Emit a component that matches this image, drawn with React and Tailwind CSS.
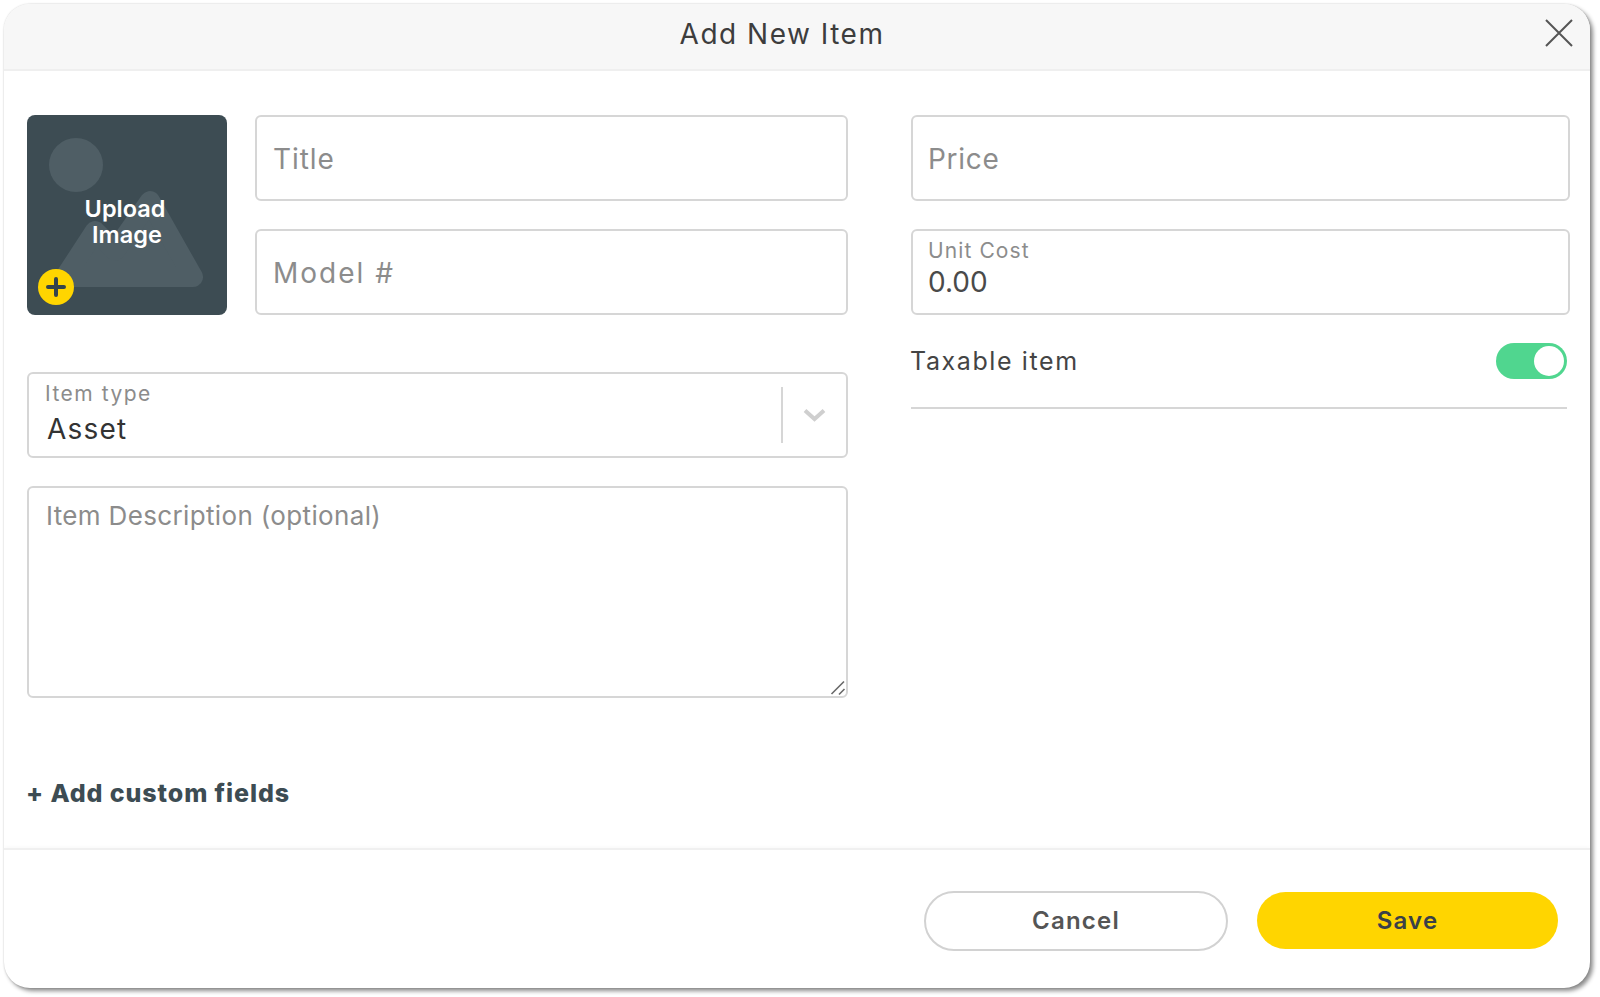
import React from "react";

function TextField({ placeholder, tracking = "tracking-[0.6px]", inset = "pl-[16px]" }) {
  return (
    <input
      readOnly
      placeholder={placeholder}
      className={`h-[86px] w-full rounded-[6px] border-2 border-[#d6d6d6] bg-white pt-[2px] text-[28px] text-[#333] outline-none placeholder:text-[#8c8c8c] ${inset} ${tracking}`}
    />
  );
}

function LabelField({ label, labelTracking, value, valueClass = "", stackClass = "", inset = "pl-[16px]", children }) {
  return (
    <div className={`flex h-[86px] w-full items-center rounded-[6px] border-2 border-[#d6d6d6] bg-white ${inset}`}>
      <div className={`flex-1 ${stackClass}`}>
        <div className={`text-[21px] leading-[24px] text-[#8c8c8c] ${labelTracking}`}>{label}</div>
        <div className={`text-[28px] leading-[34px] ${valueClass}`}>{value}</div>
      </div>
      {children}
    </div>
  );
}

export default function App() {
  return (
    <div className="h-[997px] w-[1600px] bg-white p-[4px] font-['Inter','Liberation_Sans',sans-serif]">
      <div className="flex h-[984px] w-[1586px] flex-col overflow-hidden rounded-[26px] bg-white shadow-[3px_3px_4px_rgba(0,0,0,0.45),0_0_2px_rgba(0,0,0,0.18)]">
        <header className="relative flex h-[67px] shrink-0 items-center justify-center border-b-2 border-[#efefef] bg-[#f7f7f7] pb-[5px] pr-[30px]">
          <h1 className="text-[28px] font-normal tracking-[1.5px] text-[#3d3d3d]">Add New Item</h1>
          <svg className="absolute right-[16px] top-[14px]" width="30" height="30" viewBox="0 0 30 30" fill="none" stroke="#555" strokeWidth="2">
            <path d="M2 2 L28 28 M28 2 L2 28" />
          </svg>
        </header>

        <main className="flex flex-1 pl-[23px] pr-[20px] pt-[44px]">
          <section className="w-[821px] shrink-0">
            <div className="flex gap-[28px]">
              <div className="relative flex h-[200px] w-[200px] shrink-0 items-center justify-center rounded-[8px] bg-[#3d4c53]">
                <svg className="absolute inset-0" width="200" height="200" viewBox="0 0 200 200">
                  <circle cx="49" cy="50" r="27" fill="#4f5e65" />
                  <path
                    d="M38 162 L68 116 L88 136 L123 86 L166 162 Z"
                    fill="#4f5e65"
                    stroke="#4f5e65"
                    strokeWidth="20"
                    strokeLinejoin="round"
                  />
                </svg>
                <div className="relative mr-[4px] mt-[14px] text-center text-[23.5px] font-semibold leading-[26.5px] text-white">
                  Upload
                  <br />
                  <span className="relative left-[2px]">Image</span>
                </div>
                <div className="absolute left-[11px] top-[154px] flex h-[36px] w-[36px] items-center justify-center rounded-full bg-[#ffd500]">
                  <svg width="22" height="22" viewBox="0 0 22 22" stroke="#34444c" strokeWidth="4" strokeLinecap="round">
                    <path d="M11 3 V19 M3 11 H19" />
                  </svg>
                </div>
              </div>
              <div className="flex w-[593px] flex-col gap-[28px]">
                <TextField placeholder="Title" tracking="tracking-[0.9px]" />
                <TextField placeholder="Model #" tracking="tracking-[2px]" />
              </div>
            </div>

            <div className="mt-[57px]">
              <LabelField
                label="Item type"
                labelTracking="tracking-[1.5px]"
                value={<span className="ml-[2px]">Asset</span>}
                valueClass="mt-[6px] text-[#333] tracking-[1.2px]"
                stackClass="mt-[-3px]"
              >
                <div className="h-[56px] w-[2px] bg-[#d6d6d6]" />
                <svg className="mx-[20px]" width="23" height="14" viewBox="0 0 23 14" fill="none" stroke="#cfcfcf" strokeWidth="4">
                  <path d="M2 2.5 L11.5 11 L21 2.5" />
                </svg>
              </LabelField>
            </div>

            <div className="relative mt-[28px] h-[212px]">
              <textarea
                readOnly
                placeholder="Item Description (optional)"
                className="block h-full w-full resize-none rounded-[6px] border-2 border-[#d6d6d6] bg-white pb-[12px] pl-[17px] pr-[16px] pt-[12px] text-[26px] leading-[32px] tracking-[0.35px] text-[#333] outline-none placeholder:text-[#8c8c8c]"
              />
              <svg className="absolute bottom-[2px] right-[2px]" width="16" height="16" viewBox="0 0 16 16" fill="none" stroke="#6a6a6a" strokeWidth="1.6">
                <path d="M1.5 14 L14 1.5 M9 14.5 L14.5 9" />
              </svg>
            </div>

            <div className="ml-[-1px] mt-[78px] text-[25px] font-extrabold leading-[34px] tracking-[0.9px] text-[#3d4c53]">+ Add custom fields</div>
          </section>

          <section className="ml-[63px] w-[659px] shrink-0">
            <div className="flex flex-col gap-[28px]">
              <TextField placeholder="Price" tracking="tracking-[0.7px]" inset="pl-[15px]" />
              <LabelField
                label="Unit Cost"
                labelTracking="tracking-[1.1px]"
                value="0.00"
                valueClass="mt-[2px] text-[#4a4a4a]"
                stackClass="mt-[-7px]"
                inset="pl-[15px]"
              />
            </div>
            <div className="mr-[3px] mt-[28px] flex h-[66px] items-start justify-between border-b-2 border-[#d6d6d6]">
              <div className="ml-[-1px] text-[25px] leading-[36px] tracking-[1.6px] text-[#444]">Taxable item</div>
              <div className="flex h-[36px] w-[71px] items-center justify-end rounded-full bg-[#50d68f] pr-[3px]">
                <div className="h-[30px] w-[30px] rounded-full bg-white" />
              </div>
            </div>
          </section>
        </main>

        <footer className="flex h-[140px] shrink-0 items-start justify-end gap-[29px] border-t-2 border-[#f0f0f0] pr-[32px] pt-[41px] shadow-[0_-2px_3px_rgba(0,0,0,0.02)]">
          <button className="h-[60px] w-[304px] rounded-full border-2 border-[#d2d2d2] bg-white text-[24px] font-semibold tracking-[1.2px] text-[#555]">
            Cancel
          </button>
          <button className="mt-[1px] h-[57px] w-[301px] rounded-full bg-[#ffd500] text-[24px] font-semibold tracking-[1.2px] text-[#3a4048]">
            Save
          </button>
        </footer>
      </div>
    </div>
  );
}
